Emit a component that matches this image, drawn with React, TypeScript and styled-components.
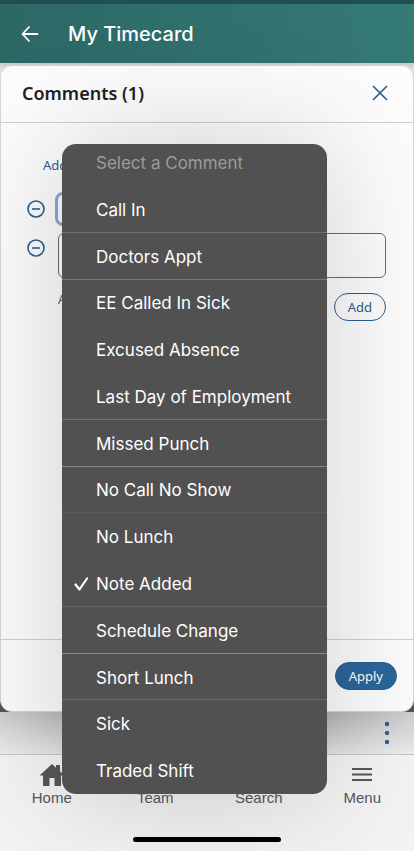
import React from "react";
import styled, { createGlobalStyle, css } from "styled-components";

const sans = `Inter, "Liberation Sans", sans-serif`;
const body = `"Noto Sans", "Open Sans", sans-serif`;
const blue = "#2c608f";

const GlobalStyle = createGlobalStyle`
  *, *::before, *::after { box-sizing: border-box; }
  body { margin: 0; background: #f0f0f0; }
  button, input, select { font: inherit; color: inherit; }
  button { margin: 0; padding: 0; border: 0; background: none; cursor: pointer; }
  h1, h2, ul { margin: 0; padding: 0; }
`;

const Page = styled.div`
  position: relative;
  display: flex;
  flex-direction: column;
  min-height: 100vh;
  overflow: hidden;
  background: #f1f1f1;
  font-family: ${body};
`;

const AppHeader = styled.header`
  display: flex;
  align-items: center;
  gap: 28px;
  height: 63px;
  padding: 0 20px;
  border-top: 4px solid #1f504f;
  background: linear-gradient(75deg, #2c6764 0%, #30706d 50%, #357a76 100%);
  color: #fff;
`;

const Title = styled.h1`
  font: 500 20px/28px ${sans};
`;

const IconButton = styled.button`
  display: grid;
  place-items: center;
  color: ${(p) => p.color ?? "inherit"};
  svg { display: block; }
`;

const Stage = styled.main`
  flex: 1;
  display: flex;
  flex-direction: column;
  padding-top: 2px;
  background: linear-gradient(#c8c8c8 0, #e2e2e2 6px, #e2e2e2 40px, #555 60px);
`;

const Dialog = styled.section`
  flex: 1;
  display: flex;
  flex-direction: column;
  border: 1px solid #d6d6d6;
  border-radius: 12px;
  background: #fcfcfc;
`;

const DialogHeader = styled.div`
  display: flex;
  align-items: center;
  justify-content: space-between;
  height: 57px;
  padding: 0 25px 3px 21px;
  border-bottom: 1px solid #cfcfcf;
`;

const DialogTitle = styled.h2`
  color: #222;
  font: 600 18px/24px ${body};
`;

const Comments = styled.div`
  flex: 1;
  padding: 32px 27px 0 25px;
`;

const LinkButton = styled.button`
  display: block;
  height: 20px;
  margin-left: 17px;
  color: ${blue};
  font-size: 13px;
  line-height: 20px;
`;

const Row = styled.div<{ $tall?: boolean }>`
  display: flex;
  align-items: flex-start;
  gap: 12px;
  margin-top: ${(p) => (p.$tall ? 7 : 17)}px;
  > button { margin-top: ${(p) => (p.$tall ? 5 : 7)}px; }
`;

const fieldBox = css`
  flex: 1;
  min-width: 0;
  border-radius: 6px;
  background: transparent;
  font-size: 14px;
`;

const Picker = styled.select`
  ${fieldBox}
  appearance: none;
  height: 34px;
  margin-left: -3px;
  margin-right: 75px;
  padding-left: 12px;
  border: 3px solid #86a6d6;
  border-radius: 8px;
  outline: 0;
`;

const Note = styled.input`
  ${fieldBox}
  height: 45px;
  padding: 0 12px;
  border: 1px solid #6c6c6c;
`;

const NoteActions = styled.div`
  display: flex;
  justify-content: space-between;
  align-items: flex-start;
  margin-top: 15px;
  padding-left: 32px;
`;

const Attach = styled.span`
  color: ${blue};
  font-size: 12px;
  line-height: 14px;
`;

const Pill = styled.button<{ $solid?: boolean }>`
  height: 28px;
  padding: 0 13px;
  border: 1px solid ${blue};
  border-radius: 14px;
  background: ${(p) => (p.$solid ? "#2c659b" : "transparent")};
  color: ${(p) => (p.$solid ? "#fff" : blue)};
  font-size: 13px;
  line-height: 24px;
`;

const DialogFooter = styled.div`
  display: flex;
  align-items: center;
  justify-content: flex-end;
  height: 72px;
  padding: 0 16px;
  border-top: 1px solid #cfcfcf;
`;

const Toolbar = styled.div`
  display: flex;
  align-items: center;
  justify-content: flex-end;
  height: 42px;
  padding: 0 24px;
  background:
    linear-gradient(90deg, rgba(255, 255, 255, 0.4), transparent 25%, transparent 75%, rgba(255, 255, 255, 0.4)),
    linear-gradient(#acacac, #e0e0e0);
`;

const TabBar = styled.nav`
  display: grid;
  grid-template-columns: repeat(4, 1fr);
  height: 97px;
  border-top: 1px solid #c4c4c4;
  background: #f3f3f3;
`;

const Tab = styled.a`
  display: flex;
  flex-direction: column;
  align-items: center;
  padding-top: 6px;
  color: #575757;
  font: 15px/18px "Liberation Sans", sans-serif;
  text-decoration: none;
  svg { display: block; height: 28px; }
`;

const HomeIndicator = styled.div`
  position: absolute;
  bottom: 9px;
  left: 50%;
  width: 148px;
  height: 5px;
  margin-left: -74px;
  border-radius: 3px;
  background: #000;
`;

const Menu = styled.ul`
  position: absolute;
  top: 144px;
  left: 62px;
  display: grid;
  grid-template-rows: 42px repeat(13, 1fr);
  width: 265px;
  height: 650px;
  border-radius: 14px;
  background: #515151;
  box-shadow: 0 0 120px rgba(0, 0, 0, 0.18);
  list-style: none;
  overflow: hidden;
`;

const Option = styled.li<{ $line?: number; $muted?: boolean }>`
  display: flex;
  border-bottom: 1px solid rgba(255, 255, 255, ${(p) => p.$line ?? 0});
  padding: ${(p) => (p.$muted ? "0 0 4px" : "2px 0 0")};
  button {
    display: grid;
    grid-template-columns: 22px 1fr;
    align-items: center;
    flex: 1;
    padding-left: 12px;
    color: ${(p) => (p.$muted ? "#9c9c9c" : "#fff")};
    font: 400 17px/22px ${sans};
    text-align: left;
  }
  span { grid-column: 2; }
`;

const options: { label: string; line?: number; checked?: boolean }[] = [
  { label: "Call In", line: 0.18 },
  { label: "Doctors Appt", line: 0.24 },
  { label: "EE Called In Sick" },
  { label: "Excused Absence" },
  { label: "Last Day of Employment", line: 0.18 },
  { label: "Missed Punch", line: 0.3 },
  { label: "No Call No Show", line: 0.06 },
  { label: "No Lunch" },
  { label: "Note Added", line: 0.12, checked: true },
  { label: "Schedule Change", line: 0.32 },
  { label: "Short Lunch", line: 0.16 },
  { label: "Sick" },
  { label: "Traded Shift" },
];

const BackArrow = () => (
  <svg width="20" height="20" viewBox="0 0 20 20" fill="none" stroke="currentColor" strokeWidth="1.800" strokeLinecap="round" strokeLinejoin="round">
    <path d="M17.500 10H2.500M9 3 2.500 10l6.500 7" />
  </svg>
);

const Cross = () => (
  <svg width="16" height="16" viewBox="0 0 16 16" stroke="currentColor" strokeWidth="1.700" strokeLinecap="round">
    <path d="m1.500 1.500 13 13m0-13-13 13" />
  </svg>
);

const Minus = () => (
  <svg width="20" height="20" viewBox="0 0 20 20" fill="none" stroke="currentColor" strokeWidth="1.600">
    <circle cx="10" cy="10" r="8" />
    <path d="M6 10h8" />
  </svg>
);

const Check = () => (
  <svg width="15" height="14" viewBox="0 0 15 14" fill="none" stroke="currentColor" strokeWidth="2.200" strokeLinecap="round" strokeLinejoin="round">
    <path d="m1.500 7.500 4 5L13 1.500" />
  </svg>
);

const Dots = () => (
  <svg width="6" height="24" viewBox="0 0 6 24" fill="currentColor">
    <circle cx="3" cy="3" r="2.200" />
    <circle cx="3" cy="12" r="2.200" />
    <circle cx="3" cy="21" r="2.200" />
  </svg>
);

const House = () => (
  <svg width="26" viewBox="0 0 26 28" fill="currentColor">
    <path d="M13 3 0.500 14.500H4V25h6.500v-8h5v8H22V14.500h3.500L21 10.300V4h-4v2.700z" />
  </svg>
);

const People = () => (
  <svg width="26" viewBox="0 0 26 28" fill="currentColor">
    <circle cx="13" cy="10" r="5" />
    <path d="M4 24c0-11 18-11 18 0z" />
  </svg>
);

const Lens = () => (
  <svg width="24" viewBox="0 0 24 28" fill="none" stroke="currentColor" strokeWidth="2.500">
    <circle cx="10" cy="12" r="6.500" />
    <path d="m15 17 6 6" />
  </svg>
);

const Bars = () => (
  <svg width="20" viewBox="0 0 20 28" stroke="currentColor" strokeWidth="2">
    <path d="M0 8h20M0 13.500h20M0 19h20" />
  </svg>
);

const tabs = [
  { label: "Home", icon: <House /> },
  { label: "Team", icon: <People /> },
  { label: "Search", icon: <Lens /> },
  { label: "Menu", icon: <Bars /> },
];

export default function App() {
  return (
    <>
      <GlobalStyle />
      <Page>
        <AppHeader>
          <IconButton aria-label="Back"><BackArrow /></IconButton>
          <Title>My Timecard</Title>
        </AppHeader>
        <Stage>
          <Dialog role="dialog" aria-labelledby="comments-title">
            <DialogHeader>
              <DialogTitle id="comments-title">Comments (1)</DialogTitle>
              <IconButton aria-label="Close" color={blue}><Cross /></IconButton>
            </DialogHeader>
            <Comments>
              <LinkButton>Add</LinkButton>
              <Row>
                <IconButton aria-label="Remove comment" color={blue}><Minus /></IconButton>
                <Picker aria-label="Comment" defaultValue="Note Added">
                  {options.map((o) => <option key={o.label}>{o.label}</option>)}
                </Picker>
              </Row>
              <Row $tall>
                <IconButton aria-label="Remove note" color={blue}><Minus /></IconButton>
                <Note aria-label="Note" />
              </Row>
              <NoteActions>
                <Attach>A</Attach>
                <Pill>Add</Pill>
              </NoteActions>
            </Comments>
            <DialogFooter>
              <Pill $solid>Apply</Pill>
            </DialogFooter>
          </Dialog>
        </Stage>
        <Toolbar>
          <IconButton aria-label="More" color={blue}><Dots /></IconButton>
        </Toolbar>
        <TabBar>
          {tabs.map((t) => (
            <Tab key={t.label} href="#">{t.icon}{t.label}</Tab>
          ))}
        </TabBar>
        <Menu aria-label="Select a Comment">
          <Option $muted><button disabled><span>Select a Comment</span></button></Option>
          {options.map((o) => (
            <Option key={o.label} $line={o.line}>
              <button aria-pressed={!!o.checked}>
                {o.checked && <Check />}
                <span>{o.label}</span>
              </button>
            </Option>
          ))}
        </Menu>
        <HomeIndicator />
      </Page>
    </>
  );
}
